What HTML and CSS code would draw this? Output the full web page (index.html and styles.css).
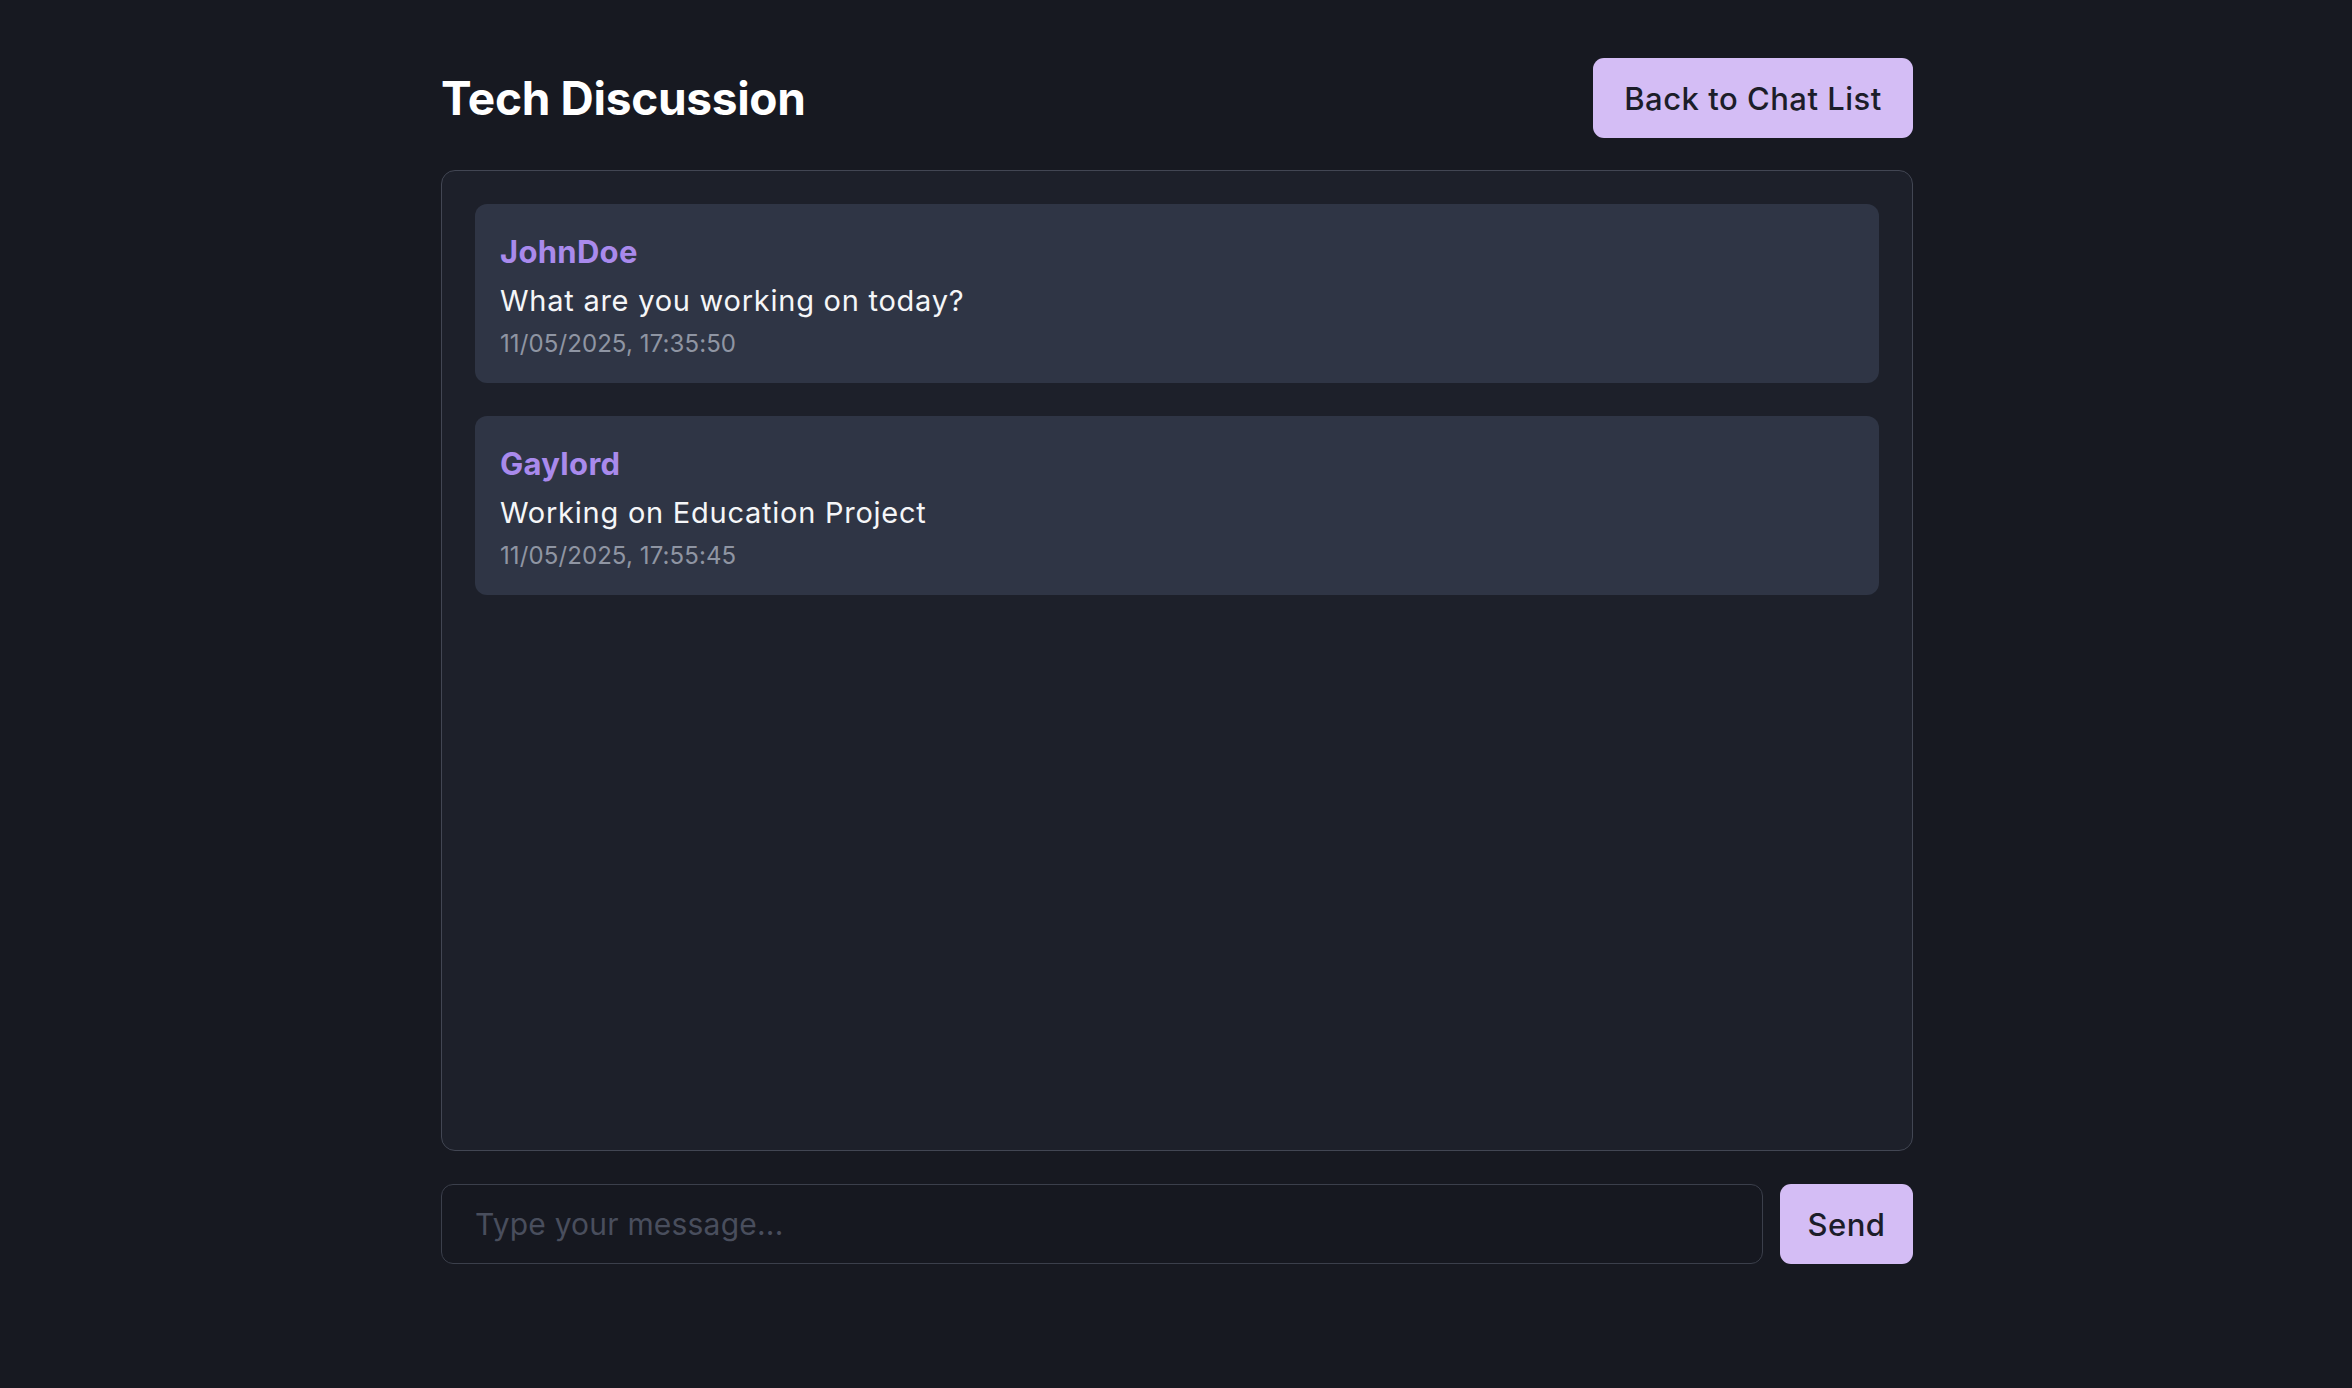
FILE: index.html
```html
<!DOCTYPE html>
<html lang="en">
<head>
<meta charset="utf-8">
<title>Tech Discussion</title>
<link rel="stylesheet" href="styles.css">
</head>
<body>
<div class="page">
  <header class="header">
    <h1 class="title">Tech Discussion</h1>
    <button class="btn btn-back" type="button">Back to Chat List</button>
  </header>
  <section class="chat">
    <div class="msg">
      <div class="msg-user">JohnDoe</div>
      <div class="msg-text">What are you working on today?</div>
      <div class="msg-time">11/05/2025, 17:35:50</div>
    </div>
    <div class="msg">
      <div class="msg-user">Gaylord</div>
      <div class="msg-text">Working on Education Project</div>
      <div class="msg-time">11/05/2025, 17:55:45</div>
    </div>
  </section>
  <form class="composer">
    <input class="composer-input" type="text" placeholder="Type your message...">
    <button class="btn btn-send" type="button">Send</button>
  </form>
</div>
</body>
</html>
```
FILE: styles.css
```css
* { box-sizing: border-box; }
html, body { margin: 0; padding: 0; }
body {
  background: #171921;
  color: #f3f4f6;
  font-family: Inter, "Noto Sans", "Liberation Sans", sans-serif;
  min-height: 1388px;
}
.page {
  width: 1474px;
  margin: 0 auto;
  padding: 58px 0 0 2px;
}
.header {
  display: flex;
  align-items: center;
  justify-content: space-between;
  height: 80px;
  margin-bottom: 32px;
}
.title {
  margin: 0;
  font-size: 46px;
  font-weight: 700;
  line-height: 1;
  color: #ffffff;
  letter-spacing: -0.3px;
}
.btn {
  border: none;
  background: #d4bdf5;
  color: #1c1d29;
  font-family: Inter, "Noto Sans", "Liberation Sans", sans-serif;
  font-size: 31px;
  font-weight: 500;
  letter-spacing: 0.5px;
  height: 80px;
  border-radius: 11px;
  padding: 0;
  cursor: pointer;
}
.btn-back { width: 320px; }
.chat {
  height: 981px;
  background: #1d202a;
  border: 1px solid #424653;
  border-radius: 14px;
  padding: 33px;
  display: flex;
  flex-direction: column;
  gap: 33px;
}
.msg {
  background: #2f3545;
  border-radius: 12px;
  padding: 27px 24px 24px 25px;
  display: flex;
  flex-direction: column;
}
.msg-user {
  font-size: 31px;
  font-weight: 700;
  line-height: 42px;
  letter-spacing: 0.3px;
  color: #a98aec;
  margin-bottom: 8px;
}
.msg-text {
  font-size: 29px;
  line-height: 40px;
  letter-spacing: 0.75px;
  color: #f5f6f8;
  margin-bottom: 8px;
}
.msg-time {
  font-size: 24px;
  line-height: 30px;
  letter-spacing: 0.1px;
  color: #8f95a3;
}
.composer {
  display: flex;
  gap: 17px;
  margin-top: 33px;
}
.composer-input {
  flex: 1;
  height: 80px;
  background: #161820;
  border: 1px solid #3b3f4b;
  border-radius: 12px;
  padding: 0 33px;
  font-family: Inter, "Noto Sans", "Liberation Sans", sans-serif;
  font-size: 30px;
  letter-spacing: 0.2px;
  color: #f3f4f6;
  outline: none;
}
.composer-input::placeholder { color: #494e5d; }
.btn-send { width: 133px; }
```
